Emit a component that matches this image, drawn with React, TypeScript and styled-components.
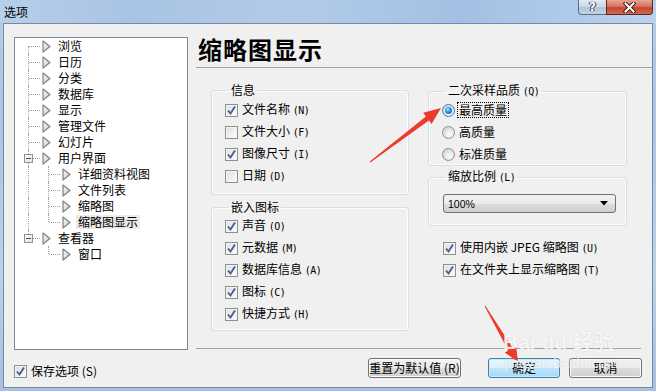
import React from 'react'
import styled, { createGlobalStyle } from 'styled-components'

const GlobalStyle = createGlobalStyle`
  html, body {
    margin: 0;
    padding: 0;
    width: 656px;
    height: 391px;
    overflow: hidden;
  }
  body {
    font-family: "Noto Sans CJK SC", "Liberation Sans", sans-serif;
    font-size: 12px;
    color: #000;
  }
`

type GuideKind = 'tee' | 'ell' | 'first' | 'pipe' | 'blank'

interface TreeItem {
  label: string
  guides: GuideKind[]
  expander?: boolean
  selected?: boolean
}

const treeItems: TreeItem[] = [
  { label: '浏览', guides: ['first'] },
  { label: '日历', guides: ['tee'] },
  { label: '分类', guides: ['tee'] },
  { label: '数据库', guides: ['tee'] },
  { label: '显示', guides: ['tee'] },
  { label: '管理文件', guides: ['tee'] },
  { label: '幻灯片', guides: ['tee'] },
  { label: '用户界面', guides: ['tee'], expander: true },
  { label: '详细资料视图', guides: ['pipe', 'tee'] },
  { label: '文件列表', guides: ['pipe', 'tee'] },
  { label: '缩略图', guides: ['pipe', 'tee'] },
  { label: '缩略图显示', guides: ['pipe', 'ell'], selected: true },
  { label: '查看器', guides: ['ell'], expander: true },
  { label: '窗口', guides: ['blank', 'ell'] },
]

const infoOptions = [
  { label: '文件名称', key: 'N', checked: true },
  { label: '文件大小', key: 'F', checked: false },
  { label: '图像尺寸', key: 'I', checked: true },
  { label: '日期', key: 'D', checked: false },
]

const iconOptions = [
  { label: '声音', key: 'O' },
  { label: '元数据', key: 'M' },
  { label: '数据库信息', key: 'A' },
  { label: '图标', key: 'C' },
  { label: '快捷方式', key: 'H' },
]

const qualityOptions = ['最高质量', '高质量', '标准质量']

const Checkbox = ({ checked }: { checked: boolean }) => (
  <CheckBoxBox>
    {checked && (
      <svg width="11" height="11" viewBox="0 0 11 11">
        <polyline points="2,5.5 4.5,8.5 9,1.5" fill="none" stroke="#485c96" strokeWidth="1.9" />
      </svg>
    )}
  </CheckBoxBox>
)

const TreeArrow = () => (
  <svg width="9" height="13" viewBox="0 0 9 13">
    <defs>
      <linearGradient id="tri" x1="0" y1="0" x2="1" y2="1">
        <stop offset="0" stopColor="#ffffff" />
        <stop offset="1" stopColor="#c4c4c4" />
      </linearGradient>
    </defs>
    <polygon points="1,1 8,6.5 1,12" fill="url(#tri)" stroke="#808080" strokeWidth="1.2" strokeLinejoin="round" />
  </svg>
)

const App: React.FC = () => {
  return (
    <Window>
      <GlobalStyle />
      <TitleBar>
        <Title>选项</Title>
        <CaptionButtons>
          <HelpButton>?</HelpButton>
          <CloseButton>
            <svg width="13" height="11" viewBox="0 0 13 11">
              <path d="M2.5 1.5 L10.5 9.5 M10.5 1.5 L2.5 9.5" stroke="#4a1a14" strokeWidth="4" strokeLinecap="square" />
              <path d="M2.5 1.5 L10.5 9.5 M10.5 1.5 L2.5 9.5" stroke="#ffffff" strokeWidth="2" strokeLinecap="square" />
            </svg>
          </CloseButton>
        </CaptionButtons>
      </TitleBar>

      <Client>
        <LeftColumn>
          <Tree>
            {treeItems.map(item => (
              <TreeRow key={item.label}>
                {item.guides.map((g, i) => (
                  <Guide key={i} $kind={g}>
                    {item.expander && i === item.guides.length - 1 && <Expander />}
                  </Guide>
                ))}
                <TreeIcon>
                  <TreeArrow />
                </TreeIcon>
                <TreeLabel $selected={item.selected}>{item.label}</TreeLabel>
              </TreeRow>
            ))}
          </Tree>
          <SaveRow>
            <Checkbox checked />
            <OptionText>保存选项 (S)</OptionText>
          </SaveRow>
        </LeftColumn>

        <RightColumn>
          <Heading>缩略图显示</Heading>
          <HeadRule />
          <Content>
            <GroupColumn>
              <GroupBox $height={112} $padTop={2}>
                <Legend>信息</Legend>
                {infoOptions.map(o => (
                  <OptionRow key={o.key}>
                    <Checkbox checked={o.checked} />
                    <OptionText>
                      {o.label} <Mnemonic>({o.key})</Mnemonic>
                    </OptionText>
                  </OptionRow>
                ))}
              </GroupBox>
              <GroupBox $height={131} $padTop={1} $gap={5}>
                <Legend>嵌入图标</Legend>
                {iconOptions.map(o => (
                  <OptionRow key={o.key}>
                    <Checkbox checked />
                    <OptionText>
                      {o.label} <Mnemonic>({o.key})</Mnemonic>
                    </OptionText>
                  </OptionRow>
                ))}
              </GroupBox>
            </GroupColumn>

            <GroupColumn $width={199}>
              <GroupBox $height={83} $padTop={0}>
                <Legend>
                  二次采样品质 <Mnemonic>(Q)</Mnemonic>
                </Legend>
                {qualityOptions.map((q, i) => (
                  <OptionRow key={q}>
                    <Radio $checked={i === 0} />
                    <OptionText $focused={i === 0}>{q}</OptionText>
                  </OptionRow>
                ))}
              </GroupBox>
              <GroupBox $height={57} $padTop={9} $gap={3}>
                <Legend>
                  缩放比例 <Mnemonic>(L)</Mnemonic>
                </Legend>
                <Select>
                  <SelectValue>100%</SelectValue>
                  <svg width="8" height="5" viewBox="0 0 8 5">
                    <polygon points="0,0 8,0 4,4.5" fill="#000" />
                  </svg>
                </Select>
              </GroupBox>
              <LooseOptions>
                <OptionRow>
                  <Checkbox checked />
                  <OptionText>
                    使用内嵌 JPEG 缩略图 <Mnemonic>(U)</Mnemonic>
                  </OptionText>
                </OptionRow>
                <OptionRow>
                  <Checkbox checked />
                  <OptionText>
                    在文件夹上显示缩略图 <Mnemonic>(T)</Mnemonic>
                  </OptionText>
                </OptionRow>
              </LooseOptions>
            </GroupColumn>
          </Content>
          <Separator />
          <ButtonRow>
            <PushButton $width={93}>重置为默认值 (R)</PushButton>
            <PushButton $width={72} $default $gap={27}>
              确定
            </PushButton>
            <PushButton $width={73} $gap={9}>
              取消
            </PushButton>
          </ButtonRow>
        </RightColumn>
      </Client>

      <Annotations width="656" height="391" viewBox="0 0 656 391">
        <polygon
          points="370.3,162.4 428.9,120.4 431.6,124 441,108 423.2,112.8 425.9,116.4 369.7,161.6"
          fill="#ec3a2d"
        />
        <polygon
          points="485.4,305.8 512.6,347.8 516,345.8 518,362 504.8,352.4 508.2,350.4 484.6,306.2"
          fill="#ec3a2d"
        />
      </Annotations>
      <Watermark>
        <WatermarkBrand>Bai du 经验</WatermarkBrand>
        <WatermarkUrl>jingyan.baidu.com</WatermarkUrl>
      </Watermark>
    </Window>
  )
}

// window frame
const Window = styled.div`
  position: relative;
  width: 656px;
  height: 391px;
  display: flex;
  flex-direction: column;
  background: linear-gradient(to bottom, #b4cdea 0%, #a9c5e7 30%, #b9d1ec 70%, #a4c0e3 100%);
  overflow: hidden;
`

const TitleBar = styled.div`
  height: 23px;
  flex: none;
  display: flex;
  align-items: flex-start;
  background: linear-gradient(to right, #b7cfea 0%, #a9c3e4 20%, #b2cbe8 45%, #a3c0e4 70%, #b9d2ee 100%);
`

const Title = styled.div`
  padding-left: 4px;
  line-height: 23px;
  font-size: 12px;
  color: #000;
`

const CaptionButtons = styled.div`
  margin-left: auto;
  margin-right: 3px;
  display: flex;
`

const HelpButton = styled.div`
  width: 28px;
  height: 15px;
  box-sizing: border-box;
  border: 1px solid #5c6e86;
  border-top: none;
  border-right: none;
  border-radius: 0 0 0 4px;
  background: linear-gradient(to bottom, #e2eaf4 0%, #c9d6e6 50%, #b4c4d9 51%, #c3d2e4 100%);
  display: flex;
  align-items: center;
  justify-content: center;
  font-family: "DejaVu Sans", sans-serif;
  font-weight: bold;
  font-size: 12px;
  line-height: 12px;
  color: #fff;
  text-shadow: 0 0 1px #2a3646, 0 0 1px #2a3646, 1px 0 0 #2a3646, -1px 0 0 #2a3646;
`

const CloseButton = styled.div`
  width: 47px;
  height: 15px;
  box-sizing: border-box;
  border: 1px solid #5a2a22;
  border-top: none;
  border-radius: 0 0 4px 0;
  background: linear-gradient(to bottom, #e8a493 0%, #d67560 45%, #c6452f 55%, #d46a4f 100%);
  display: flex;
  align-items: center;
  justify-content: center;
`

const Client = styled.div`
  flex: 1;
  margin: 0 3px 3px 3px;
  border: 1px solid #7a8a9e;
  background: #f0f0f0;
  display: flex;
  min-height: 0;
`

// tree
const LeftColumn = styled.div`
  flex: none;
  padding: 13px 0 0 10px;
  display: flex;
  flex-direction: column;
`

const Tree = styled.div`
  width: 174px;
  height: 313px;
  box-sizing: border-box;
  border: 1px solid #828790;
  background: #fff;
  padding: 0 0 0 5px;
`

const TreeRow = styled.div`
  height: 16px;
  display: flex;
  align-items: center;
`

const vertical: Record<GuideKind, string> = {
  tee: 'top: 0; bottom: 0;',
  ell: 'top: 0; height: 8px;',
  first: 'top: 8px; bottom: 0;',
  pipe: 'top: 0; bottom: 0;',
  blank: 'display: none;',
}

const Guide = styled.span<{ $kind: GuideKind }>`
  position: relative;
  flex: none;
  width: 20px;
  height: 16px;
  display: flex;
  align-items: center;

  &::before {
    content: '';
    position: absolute;
    left: 8px;
    border-left: 1px dotted #a0a0a0;
    ${p => vertical[p.$kind]}
  }
  &::after {
    content: '';
    position: absolute;
    left: 9px;
    right: 0;
    top: 8px;
    border-top: 1px dotted #a0a0a0;
    display: ${p => (p.$kind === 'pipe' || p.$kind === 'blank' ? 'none' : 'block')};
  }
`

const Expander = styled.span`
  position: relative;
  z-index: 1;
  width: 9px;
  height: 9px;
  margin: 1px 0 0 4px;
  box-sizing: border-box;
  border: 1px solid #919191;
  background: linear-gradient(135deg, #ffffff, #e2e2e2);
  display: flex;
  align-items: center;
  justify-content: center;

  &::before {
    content: '';
    width: 5px;
    height: 1px;
    background: #2b4f8c;
  }
`

const TreeIcon = styled.span`
  flex: none;
  width: 16px;
  height: 16px;
  display: flex;
  align-items: center;
  padding-left: 2px;
  box-sizing: border-box;
`

const TreeLabel = styled.span<{ $selected?: boolean }>`
  padding: 0 2px;
  line-height: 14px;
  white-space: nowrap;
  background: ${p => (p.$selected ? '#ebebeb' : 'transparent')};
`

const SaveRow = styled.div`
  margin-top: 10px;
  height: 22px;
  display: flex;
  align-items: center;
  gap: 3px;
`

// right page
const RightColumn = styled.div`
  flex: 1;
  margin-left: 8px;
  display: flex;
  flex-direction: column;
`

const Heading = styled.div`
  margin-top: 10px;
  padding-left: 2px;
  height: 30px;
  line-height: 30px;
  font-size: 24px;
  font-weight: 700;
  letter-spacing: 1px;
`

const HeadRule = styled.div`
  margin-top: 3px;
  border-top: 1px solid #a0a0a0;
`

const Content = styled.div`
  margin-top: 15px;
  padding-left: 15px;
  display: flex;
  gap: 19px;
  align-items: flex-start;
`

const GroupColumn = styled.div<{ $width?: number }>`
  width: ${p => p.$width ?? 198}px;
  display: flex;
  flex-direction: column;
`

const GroupBox = styled.fieldset<{ $height: number; $padTop: number; $gap?: number }>`
  margin: ${p => p.$gap ?? 0}px 0 0 0;
  min-width: 0;
  box-sizing: border-box;
  height: ${p => p.$height}px;
  padding: ${p => p.$padTop}px 0 0 13px;
  border: 1px solid #d5dfe5;
  border-radius: 3px;
  box-shadow: inset 0 0 0 1px #fbfcfd;
`

const Legend = styled.legend`
  margin-left: 4px;
  padding: 0 2px;
  font-size: 12px;
  line-height: 14px;
`

const OptionRow = styled.div`
  height: 22px;
  display: flex;
  align-items: center;
  gap: 3px;
`

const OptionText = styled.span<{ $focused?: boolean }>`
  line-height: 14px;
  white-space: nowrap;
  padding: 0 1px;
  outline: ${p => (p.$focused ? '1px dotted #000' : 'none')};
`

const Mnemonic = styled.span`
  font-family: "DejaVu Sans Mono", monospace;
  font-size: 10px;
  letter-spacing: -0.5px;
`

const CheckBoxBox = styled.span`
  flex: none;
  width: 13px;
  height: 13px;
  box-sizing: border-box;
  border: 1px solid #8e8f8f;
  background: linear-gradient(135deg, #dcdcdc 0%, #f2f2f2 60%, #ffffff 100%);
  box-shadow: inset 0 0 0 1px #f4f4f4;
  display: flex;
  align-items: center;
  justify-content: center;
`

const Radio = styled.span<{ $checked?: boolean }>`
  flex: none;
  position: relative;
  width: 13px;
  height: 13px;
  box-sizing: border-box;
  border-radius: 50%;
  border: 1px solid ${p => (p.$checked ? '#3c7fb1' : '#8e8f8f')};
  background: radial-gradient(circle at 60% 65%, #ffffff 0%, #e6e6e6 45%, #c9c9c9 100%);
  display: flex;
  align-items: center;
  justify-content: center;

  &::after {
    content: '';
    display: ${p => (p.$checked ? 'block' : 'none')};
    width: 7px;
    height: 7px;
    border-radius: 50%;
    background: radial-gradient(circle at 40% 35%, #9fe2ff 0%, #2b92dc 45%, #0b4f8a 100%);
  }
`

const Select = styled.div`
  margin-left: 1px;
  width: 173px;
  height: 19px;
  box-sizing: border-box;
  border: 1px solid #707070;
  border-radius: 3px;
  background: linear-gradient(to bottom, #f2f2f2 0%, #ebebeb 50%, #dddddd 51%, #cfcfcf 100%);
  display: flex;
  align-items: center;
  justify-content: space-between;
  padding: 0 7px 0 4px;
`

const SelectValue = styled.span`
  font-family: "Liberation Sans", sans-serif;
  font-size: 10.5px;
`

const LooseOptions = styled.div`
  margin-top: 11px;
  padding-left: 15px;
`

const Separator = styled.div`
  margin: 17px 11px 0 0;
  border-top: 1px solid #a0a0a0;
`

const ButtonRow = styled.div`
  margin-top: 9px;
  padding-right: 10px;
  display: flex;
  justify-content: flex-end;
`

const PushButton = styled.div<{ $width: number; $default?: boolean; $gap?: number }>`
  width: ${p => p.$width}px;
  margin-left: ${p => p.$gap ?? 0}px;
  height: 20px;
  box-sizing: border-box;
  border: 1px solid ${p => (p.$default ? '#3c7fb1' : '#707070')};
  border-radius: 3px;
  background: ${p =>
    p.$default
      ? 'linear-gradient(to bottom, #eaf6fd 0%, #d9f0fc 50%, #bee6fd 51%, #a7d9f5 100%)'
      : 'linear-gradient(to bottom, #f2f2f2 0%, #ebebeb 50%, #dddddd 51%, #cfcfcf 100%)'};
  box-shadow: inset 0 0 0 1px ${p => (p.$default ? '#c8ecfc' : '#fbfbfb')};
  display: flex;
  align-items: center;
  justify-content: center;
  white-space: nowrap;
  line-height: 14px;
`

// annotation overlay
const Annotations = styled.svg`
  position: absolute;
  left: 0;
  top: 0;
  pointer-events: none;
`

const Watermark = styled.div`
  position: absolute;
  left: 503px;
  top: 330px;
  pointer-events: none;
  display: flex;
  flex-direction: column;
  color: rgba(255, 255, 255, 0.85);
  text-shadow: 0 0 1px rgba(120, 120, 120, 0.35);
`

const WatermarkBrand = styled.span`
  font-family: "Liberation Sans", "Noto Sans CJK SC", sans-serif;
  font-size: 21px;
  font-weight: bold;
  line-height: 24px;
`

const WatermarkUrl = styled.span`
  font-family: "Liberation Sans", sans-serif;
  font-size: 14px;
  line-height: 18px;
  margin-left: 2px;
`

export default App
